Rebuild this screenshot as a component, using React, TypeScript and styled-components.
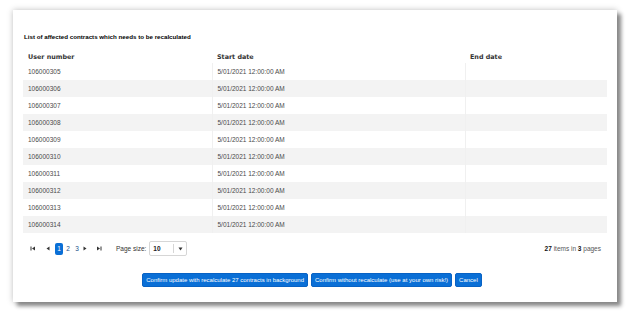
import styled, { createGlobalStyle } from "styled-components";

const GlobalStyle = createGlobalStyle`
  body {
    margin: 0;
    background: #ffffff;
    font-family: "Liberation Sans", Arial, sans-serif;
  }
`;

const Page = styled.div`
  padding: 10px 13px;
  width: 630px;
  height: 312px;
  box-sizing: border-box;
`;

const Panel = styled.div`
  width: 604px;
  height: 292px;
  box-sizing: border-box;
  background: #ffffff;
  padding: 22px 10px 0 10px;
  box-shadow: 4px 4px 4px #888888, 0 0 6px rgba(0, 0, 0, 0.25);
  display: flex;
  flex-direction: column;
`;

const Title = styled.div`
  font-size: 6.2px;
  font-weight: bold;
  line-height: 10px;
  color: #000;
  padding-left: 1px;
  margin-bottom: 8px;
`;

const Table = styled.table`
  border-collapse: collapse;
  table-layout: fixed;
  width: 584px;
`;

const Th = styled.th<{ $w: number }>`
  width: ${(p) => p.$w}px;
  height: 13px;
  padding: 0 5px;
  text-align: left;
  font-family: "DejaVu Sans", Verdana, sans-serif;
  font-size: 6.4px;
  font-weight: bold;
  color: #333;
  box-sizing: border-box;
`;

const Tr = styled.tr<{ $shaded: boolean }>`
  background: ${(p) => (p.$shaded ? "#f3f3f3" : "#ffffff")};
`;

const Td = styled.td`
  height: 17px;
  padding: 0 5px;
  font-size: 6.5px;
  color: #4a4a4a;
  box-sizing: border-box;
  & + & {
    border-left: 1px solid #f0f0f0;
  }
`;

const Pager = styled.div`
  margin-top: 7px;
  height: 17px;
  display: flex;
  align-items: center;
  justify-content: space-between;
`;

const PagerLeft = styled.div`
  display: flex;
  align-items: center;
  padding-left: 7px;
`;

const NavIcon = styled.span<{ $gap: number }>`
  display: inline-flex;
  width: 6px;
  margin-right: ${(p) => p.$gap}px;
  color: #333;
`;

const PageNum = styled.span<{ $active?: boolean }>`
  display: inline-flex;
  align-items: center;
  justify-content: center;
  width: 8px;
  height: 12px;
  border-radius: 2px;
  margin-right: 1px;
  font-size: 6.5px;
  color: ${(p) => (p.$active ? "#fff" : "#1a4f8a")};
  background: ${(p) => (p.$active ? "#0a6fd6" : "transparent")};
`;

const SizeLabel = styled.span`
  font-size: 6.5px;
  color: #333;
  margin-left: 8px;
  margin-right: 3px;
`;

const SizeBox = styled.div`
  width: 38px;
  height: 15px;
  box-sizing: border-box;
  border: 1px solid #d6d6d6;
  border-radius: 2px;
  display: flex;
  align-items: center;
`;

const SizeValue = styled.span`
  flex: 1;
  padding-left: 3px;
  font-size: 6.5px;
  font-weight: bold;
  color: #222;
  border-right: 1px solid #d6d6d6;
  line-height: 9px;
`;

const SizeArrow = styled.span`
  width: 12px;
  display: flex;
  justify-content: center;
  color: #333;
`;

const Summary = styled.div`
  font-size: 6.5px;
  color: #555;
  padding-right: 6px;
  b {
    color: #111;
  }
`;

const Actions = styled.div`
  margin-top: 16px;
  display: flex;
  justify-content: center;
  gap: 3px;
  padding-right: 6px;
`;

const Button = styled.button`
  height: 14px;
  padding: 0 3px;
  border: 1px solid #0862c4;
  border-radius: 2px;
  background: #0a6fd6;
  color: #fff;
  font-family: "Liberation Sans", Arial, sans-serif;
  font-size: 6px;
  line-height: 12px;
  cursor: pointer;
`;

const Arrow = ({ dir, bar }: { dir: "left" | "right"; bar?: boolean }) => (
  <svg width="6" height="5" viewBox="0 0 6 5">
    {dir === "left" ? (
      <>
        {bar && <rect x="0.5" y="0.5" width="1" height="4" fill="currentColor" />}
        <polygon points={bar ? "5,0.5 2,2.5 5,4.5" : "4.5,0.5 1.5,2.5 4.5,4.5"} fill="currentColor" />
      </>
    ) : (
      <>
        <polygon points={bar ? "1,0.5 4,2.5 1,4.5" : "1.5,0.5 4.5,2.5 1.5,4.5"} fill="currentColor" />
        {bar && <rect x="4.5" y="0.5" width="1" height="4" fill="currentColor" />}
      </>
    )}
  </svg>
);

const rows = Array.from({ length: 10 }, (_, i) => `1060003${String(5 + i).padStart(2, "0")}`);

export default function App() {
  return (
    <>
      <GlobalStyle />
      <Page>
        <Panel>
          <Title>List of affected contracts which needs to be recalculated</Title>
          <Table>
            <thead>
              <tr>
                <Th $w={189}>User number</Th>
                <Th $w={253}>Start date</Th>
                <Th $w={142}>End date</Th>
              </tr>
            </thead>
            <tbody>
              {rows.map((num, i) => (
                <Tr key={num} $shaded={i % 2 === 1}>
                  <Td>{num}</Td>
                  <Td>5/01/2021 12:00:00 AM</Td>
                  <Td></Td>
                </Tr>
              ))}
            </tbody>
          </Table>
          <Pager>
            <PagerLeft>
              <NavIcon $gap={9}>
                <Arrow dir="left" bar />
              </NavIcon>
              <NavIcon $gap={4}>
                <Arrow dir="left" />
              </NavIcon>
              <PageNum $active>1</PageNum>
              <PageNum>2</PageNum>
              <PageNum>3</PageNum>
              <NavIcon $gap={8}>
                <Arrow dir="right" />
              </NavIcon>
              <NavIcon $gap={6}>
                <Arrow dir="right" bar />
              </NavIcon>
              <SizeLabel>Page size:</SizeLabel>
              <SizeBox>
                <SizeValue>10</SizeValue>
                <SizeArrow>
                  <svg width="5" height="4" viewBox="0 0 5 4">
                    <polygon points="0.5,0.5 4.5,0.5 2.5,3.5" fill="currentColor" />
                  </svg>
                </SizeArrow>
              </SizeBox>
            </PagerLeft>
            <Summary>
              <b>27</b> items in <b>3</b> pages
            </Summary>
          </Pager>
          <Actions>
            <Button>Confirm update with recalculate 27 contracts in background</Button>
            <Button>Confirm without recalculate (use at your own risk!)</Button>
            <Button>Cancel</Button>
          </Actions>
        </Panel>
      </Page>
    </>
  );
}
